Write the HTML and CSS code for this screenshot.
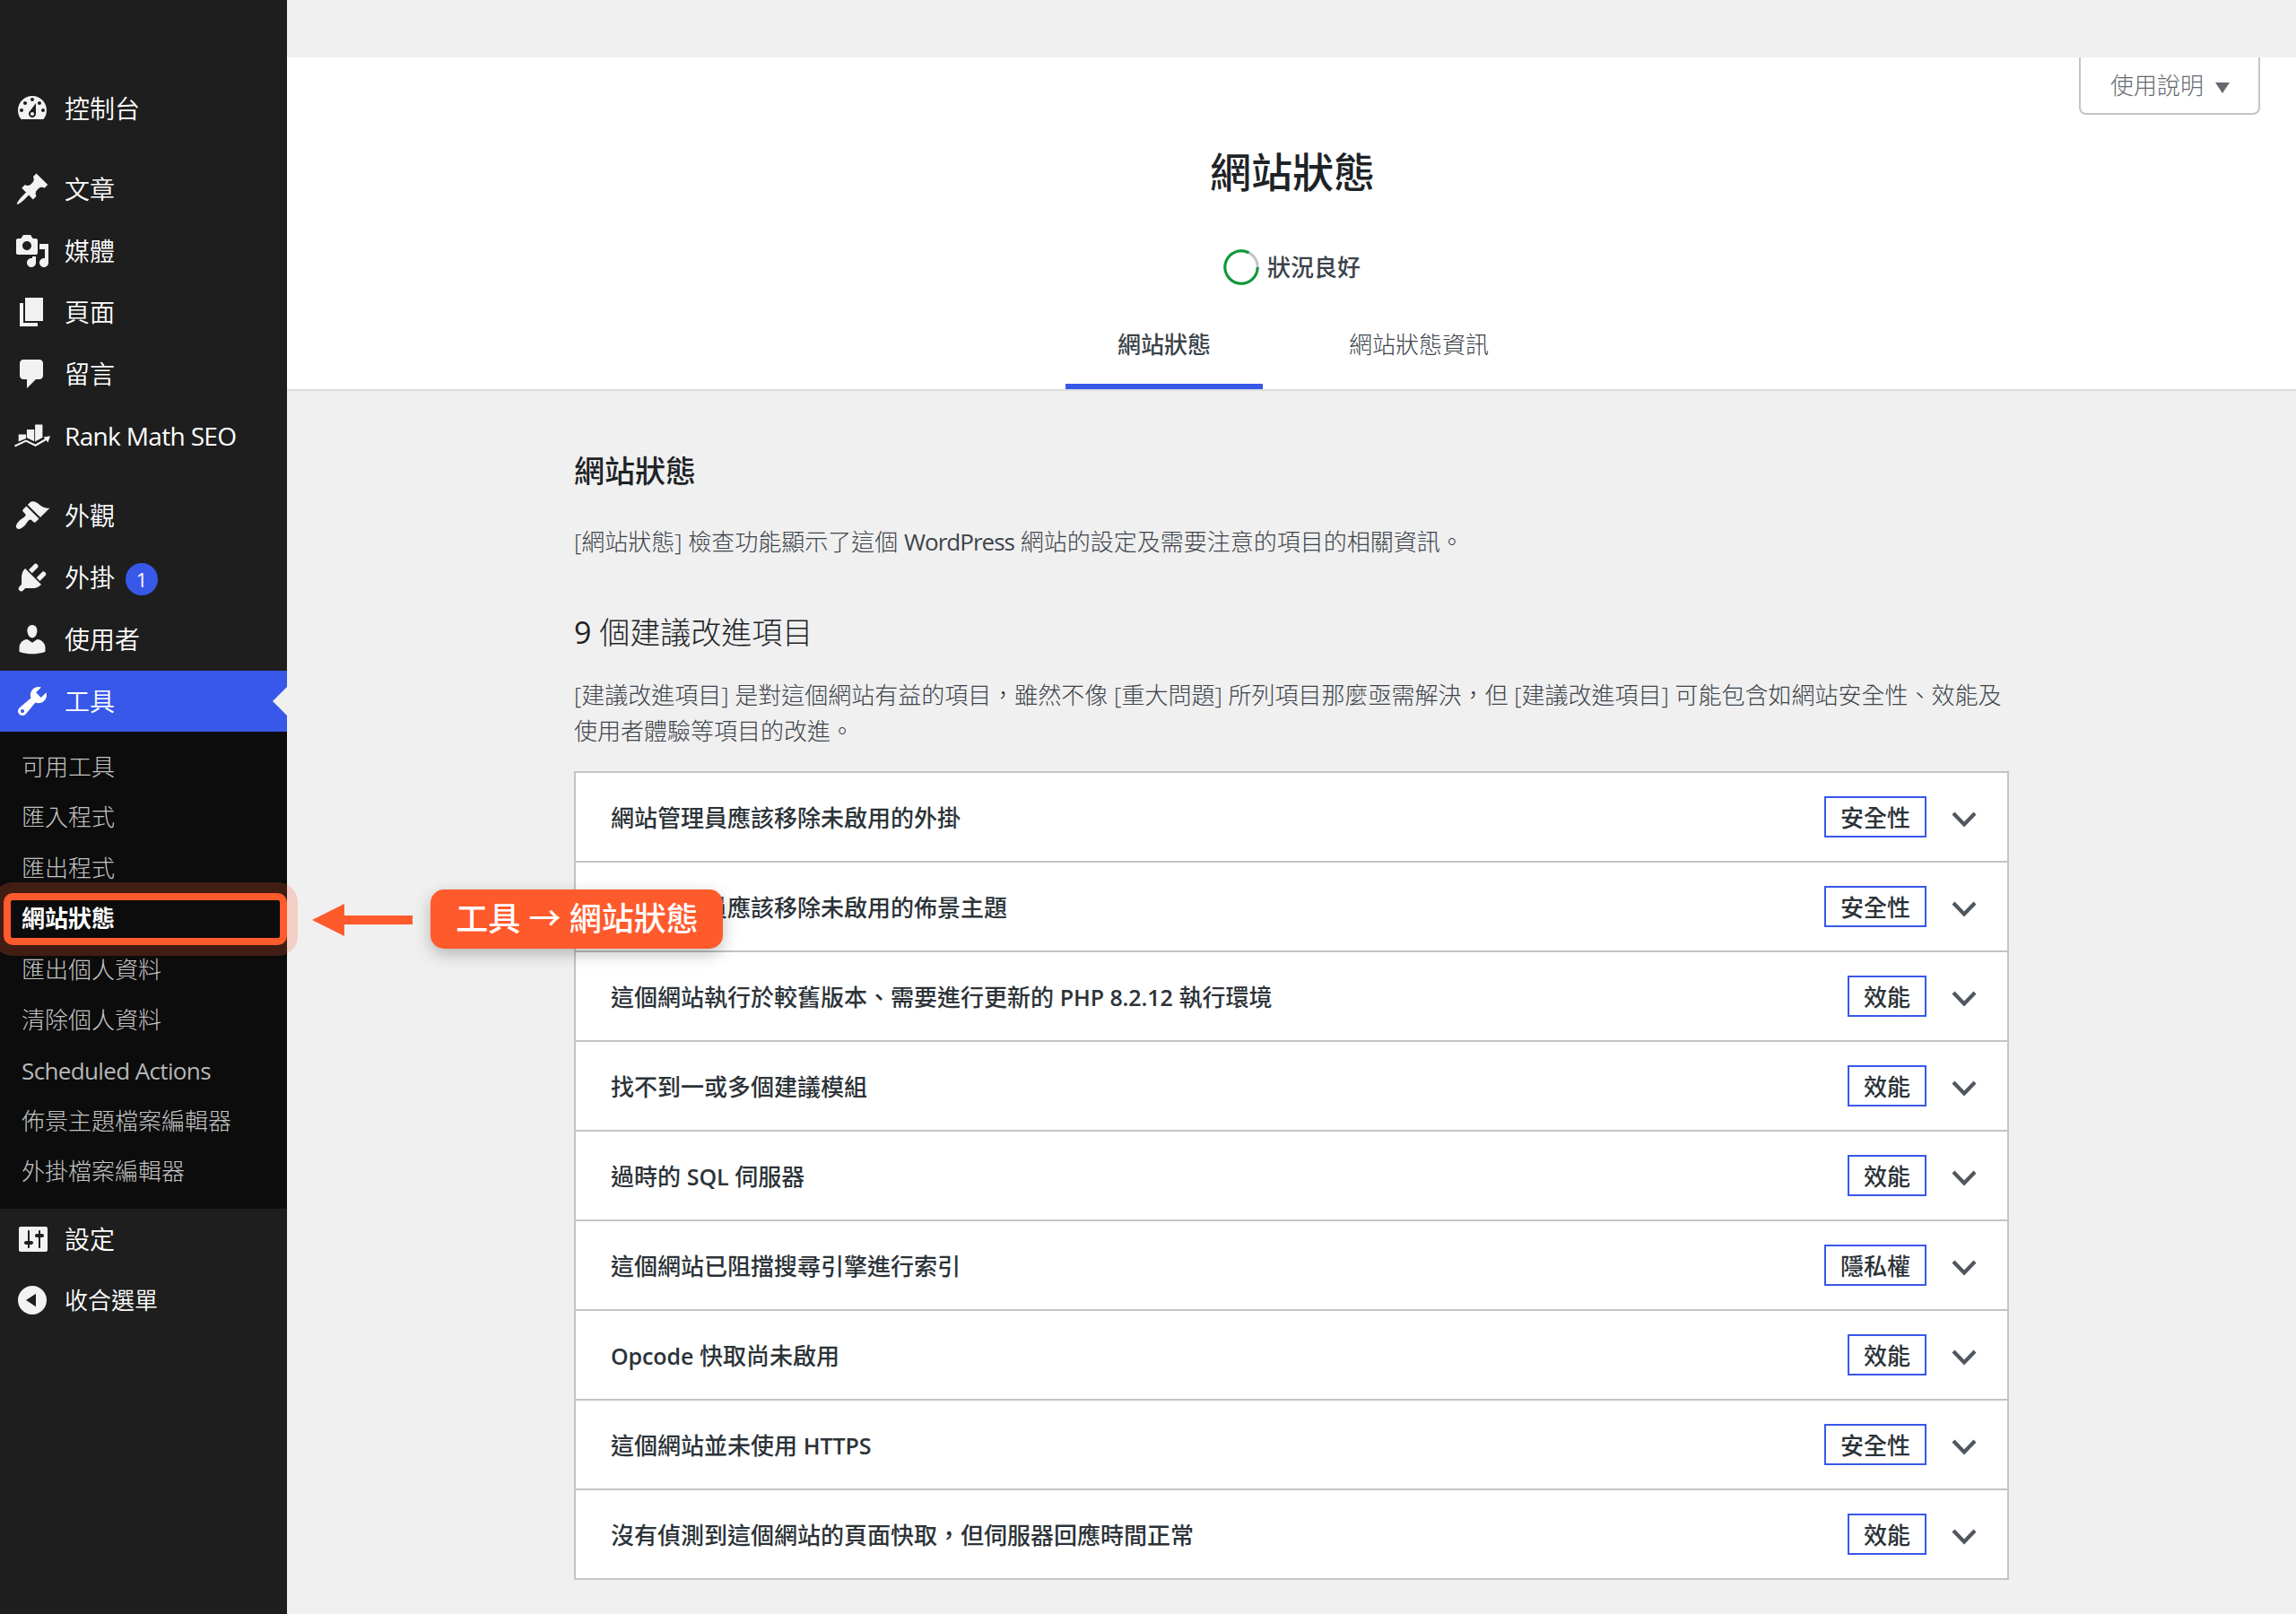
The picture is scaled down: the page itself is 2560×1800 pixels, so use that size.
FILE: index.html
```html
<!DOCTYPE html>
<html lang="zh-TW">
<head>
<meta charset="utf-8">
<title>網站狀態</title>
<link rel="stylesheet" href="styles.css">
</head>
<body>

<nav class="menu">
  <ul class="menu-list">
    <li class="item"><svg class="icon" viewBox="0 0 20 20"><path d="M3.76 16h12.48c1.1-1.37 1.76-3.11 1.76-5 0-4.42-3.58-8-8-8s-8 3.58-8 8c0 1.89.66 3.63 1.76 5zM10 4c.55 0 1 .45 1 1s-.45 1-1 1-1-.45-1-1 .45-1 1-1zM6 6c.55 0 1 .45 1 1s-.45 1-1 1-1-.45-1-1 .45-1 1-1zm8 0c.55 0 1 .45 1 1s-.45 1-1 1-1-.45-1-1 .45-1 1-1zm-5.37 5.55L12 7v6c0 1.1-.9 2-2 2s-2-.9-2-2c0-.57.24-1.08.63-1.45zM4 10c.55 0 1 .45 1 1s-.45 1-1 1-1-.45-1-1 .45-1 1-1zm12 0c.55 0 1 .45 1 1s-.45 1-1 1-1-.45-1-1 .45-1 1-1zm-5 3c0-.55-.45-1-1-1s-1 .45-1 1 .45 1 1 1 1-.45 1-1z"/></svg><span>控制台</span></li>
    <li class="separator"></li>
    <li class="item"><svg class="icon" viewBox="0 0 20 20"><path d="M10.44 3.02l1.82-1.82 6.36 6.35-1.83 1.82c-1.05-.68-2.48-.57-3.41.36l-.75.75c-.92.93-1.04 2.35-.35 3.41l-1.83 1.82-2.41-2.41-2.8 2.79c-.42.42-3.38 2.71-3.8 2.29s1.86-3.39 2.28-3.81l2.79-2.79L4.1 9.36l1.83-1.82c1.05.69 2.48.57 3.4-.36l.75-.75c.93-.92 1.05-2.35.36-3.41z"/></svg><span>文章</span></li>
    <li class="item"><svg class="icon" viewBox="0 0 20 20"><path d="M13 11V4c0-.55-.45-1-1-1h-1.67L9 1H5L3.67 3H2c-.55 0-1 .45-1 1v7c0 .55.45 1 1 1h10c.55 0 1-.45 1-1zM7 4.5c1.38 0 2.5 1.12 2.5 2.5S8.38 9.5 7 9.5 4.5 8.38 4.5 7 5.62 4.5 7 4.5zM14 6h5v10.5c0 1.38-1.12 2.5-2.5 2.5S14 17.88 14 16.5s1.12-2.5 2.5-2.5c.17 0 .34.02.5.05V9h-3V6zm-4 8.05V13h2v3.5c0 1.38-1.12 2.5-2.5 2.5S7 17.88 7 16.5 8.12 14 9.5 14c.17 0 .34.02.5.05z"/></svg><span>媒體</span></li>
    <li class="item"><svg class="icon" viewBox="0 0 20 20"><path d="M6 15V2h10v13H6zm-1 1h8v2H3V5h2v11z"/></svg><span>頁面</span></li>
    <li class="item"><svg class="icon" viewBox="0 0 20 20"><path d="M5 2h9c1.1 0 2 .9 2 2v7c0 1.1-.9 2-2 2h-2l-5 5v-5H5c-1.1 0-2-.9-2-2V4c0-1.1.9-2 2-2z"/></svg><span>留言</span></li>
    <li class="item"><svg class="icon" viewBox="0 0 40 40"><path d="M4.700 18.500H13v4.500L4.700 26.500zM13.900 13h8.300v13.300L13.900 22.300zM23.100 7.500h8.300V22l-8.300 4.500z"/><path d="M.5 31.500L13 25.600 23.500 30.800 36 23.500" fill="none" stroke="#f3f1f1" stroke-width="2.200"/><path d="M32.500 21.500l7.500-1.200-2.500 7.200z"/></svg><span class="latin">Rank Math SEO</span></li>
    <li class="separator"></li>
    <li class="item"><svg class="icon" viewBox="0 0 20 20"><path d="M14.48 11.06L7.41 3.99l1.5-1.5c.5-.56 2.3-.47 3.51.32 1.21.8 1.43 1.28 2.91 2.1 1.18.64 2.45 1.26 4.45.85zm-.71.71L6.7 4.7 4.93 6.47c-.39.39-.39 1.02 0 1.41l1.06 1.06c.39.39.39 1.03 0 1.42-.6.6-1.43 1.11-2.21 1.69-.35.26-.7.53-1.01.84C1.43 14.23.4 16.08 1.4 17.07c.99 1 2.84-.03 4.18-1.36.31-.31.58-.66.85-1.02.57-.78 1.08-1.61 1.69-2.21.39-.39 1.02-.39 1.41 0l1.06 1.06c.39.39 1.02.39 1.41 0z"/></svg><span>外觀</span></li>
    <li class="item"><svg class="icon" viewBox="0 0 20 20"><path d="M13.11 4.36L9.87 7.6 8 5.73l3.24-3.24c.35-.34 1.05-.2 1.56.32.52.51.66 1.21.31 1.55zm-8 1.77l.91-1.12 9.01 9.01-1.19.84c-.71.71-2.63 1.16-3.82 1.16H6.14L4.9 17.26c-.59.59-1.54.59-2.12 0-.59-.58-.59-1.53 0-2.12l1.24-1.24v-3.88c0-1.13.4-3.19 1.09-3.89zm7.26 3.97l3.24-3.24c.34-.35 1.04-.21 1.55.31.52.51.66 1.21.31 1.55l-3.24 3.25z"/></svg><span>外掛</span><b class="count">1</b></li>
    <li class="item"><svg class="icon" viewBox="0 0 20 20"><path d="M10 9.25c-2.27 0-2.73-3.44-2.73-3.44C7 4.02 7.82 2 9.97 2c2.16 0 2.98 2.02 2.71 3.81 0 0-.41 3.44-2.68 3.44zm0 2.57L12.72 10c2.39 0 4.52 2.33 4.52 4.53v2.49s-3.65 1.13-7.24 1.13c-3.65 0-7.24-1.13-7.24-1.13v-2.49c0-2.25 1.94-4.48 4.47-4.48z"/></svg><span>使用者</span></li>
    <li class="item current"><svg class="icon" viewBox="0 0 20 20"><path d="M16.68 9.77c-1.34 1.34-3.3 1.67-4.95.99l-5.41 6.52c-.99.99-2.59.99-3.58 0s-.99-2.59 0-3.57l6.52-5.42c-.68-1.65-.35-3.61.99-4.95 1.28-1.28 3.12-1.62 4.72-1.06l-2.89 2.89 2.82 2.82 2.86-2.87c.53 1.58.18 3.39-1.08 4.65zM3.81 16.21c.4.39 1.04.39 1.43 0 .4-.4.4-1.04 0-1.43-.39-.4-1.03-.4-1.43 0-.39.39-.39 1.03 0 1.43z"/></svg><span>工具</span></li>
  </ul>
  <ul class="submenu">
    <li>可用工具</li>
    <li>匯入程式</li>
    <li>匯出程式</li>
    <li class="active">網站狀態</li>
    <li>匯出個人資料</li>
    <li>清除個人資料</li>
    <li class="latin">Scheduled Actions</li>
    <li>佈景主題檔案編輯器</li>
    <li>外掛檔案編輯器</li>
  </ul>
  <ul class="menu-end">
    <li class="item"><svg class="icon" viewBox="-.5 0 20 20"><path d="M18 16V4c0-.55-.45-1-1-1H3c-.55 0-1 .45-1 1v12c0 .55.45 1 1 1h14c.55 0 1-.45 1-1zM8 11h1c.55 0 1 .45 1 1s-.45 1-1 1H8v1.500c0 .28-.22.5-.5.5s-.5-.22-.5-.5V13H6c-.55 0-1-.45-1-1s.45-1 1-1h1V5.500c0-.28.22-.5.5-.5s.5.22.5.5V11zm5-2h-1c-.55 0-1-.45-1-1s.45-1 1-1h1V5.500c0-.28.22-.5.5-.5s.5.22.5.5V7h1c.55 0 1 .45 1 1s-.45 1-1 1h-1v5.500c0 .28-.22.5-.5.5s-.5-.22-.5-.5V9z"/></svg><span>設定</span></li>
    <li class="item collapse"><svg class="icon" viewBox="0 0 20 20"><path fill-rule="evenodd" d="M10 2a8 8 0 1 0 0 16 8 8 0 0 0 0-16zM12 6.400v7.200L6.500 10z"/></svg><span>收合選單</span></li>
  </ul>
</nav>

<main class="content">
  <header class="header">
    <div class="help">使用說明 <svg width="16" height="12" viewBox="0 0 16 12"><path d="M0 0h16L8 12z" fill="#646970"/></svg></div>
    <h1>網站狀態</h1>
    <div class="progress">
      <svg width="40" height="40" viewBox="0 0 40 40" fill="none" stroke-width="3">
        <circle cx="20" cy="20" r="18.200" stroke="#c3c4c7"/>
        <path d="M38.200 20A18.200 18.200 0 1 1 28.500 3.900" stroke="#0c9a3a"/>
      </svg>
      <span>狀況良好</span>
    </div>
    <div class="tabs">
      <div class="tab on">網站狀態</div>
      <div class="tab">網站狀態資訊</div>
    </div>
  </header>

  <section class="body">
    <h2>網站狀態</h2>
    <p class="intro">[網站狀態] 檢查功能顯示了這個 <span class="latin">WordPress</span> 網站的設定及需要注意的項目的相關資訊。</p>
    <h3><span class="latin">9</span> 個建議改進項目</h3>
    <p class="desc">[建議改進項目] 是對這個網站有益的項目，雖然不像 [重大問題] 所列項目那麼亟需解決，但 [建議改進項目] 可能包含如網站安全性、效能及<br>使用者體驗等項目的改進。</p>

    <div class="issues">
      <div class="issue"><span class="name">網站管理員應該移除未啟用的外掛</span><span class="badge">安全性</span><svg class="chevron" viewBox="0 0 28 18"><path d="M2 2l12 12.500L26 2"/></svg></div>
      <div class="issue"><span class="name">網站管理員應該移除未啟用的佈景主題</span><span class="badge">安全性</span><svg class="chevron" viewBox="0 0 28 18"><path d="M2 2l12 12.500L26 2"/></svg></div>
      <div class="issue"><span class="name">這個網站執行於較舊版本、需要進行更新的 <span class="latin">PHP 8.2.12</span> 執行環境</span><span class="badge">效能</span><svg class="chevron" viewBox="0 0 28 18"><path d="M2 2l12 12.500L26 2"/></svg></div>
      <div class="issue"><span class="name">找不到一或多個建議模組</span><span class="badge">效能</span><svg class="chevron" viewBox="0 0 28 18"><path d="M2 2l12 12.500L26 2"/></svg></div>
      <div class="issue"><span class="name">過時的 <span class="latin">SQL</span> 伺服器</span><span class="badge">效能</span><svg class="chevron" viewBox="0 0 28 18"><path d="M2 2l12 12.500L26 2"/></svg></div>
      <div class="issue"><span class="name">這個網站已阻擋搜尋引擎進行索引</span><span class="badge">隱私權</span><svg class="chevron" viewBox="0 0 28 18"><path d="M2 2l12 12.500L26 2"/></svg></div>
      <div class="issue"><span class="name"><span class="latin">Opcode</span> 快取尚未啟用</span><span class="badge">效能</span><svg class="chevron" viewBox="0 0 28 18"><path d="M2 2l12 12.500L26 2"/></svg></div>
      <div class="issue"><span class="name">這個網站並未使用 <span class="latin">HTTPS</span></span><span class="badge">安全性</span><svg class="chevron" viewBox="0 0 28 18"><path d="M2 2l12 12.500L26 2"/></svg></div>
      <div class="issue"><span class="name">沒有偵測到這個網站的頁面快取，但伺服器回應時間正常</span><span class="badge">效能</span><svg class="chevron" viewBox="0 0 28 18"><path d="M2 2l12 12.500L26 2"/></svg></div>
    </div>
  </section>
</main>

<!-- callout over the page -->
<div class="mark"></div>
<svg class="arrow" viewBox="0 0 112 36"><path d="M0 18L36 0v13h76v10H36v13z" fill="#ff5a2c"/></svg>
<div class="callout">工具 → 網站狀態</div>

</body>
</html>
```
FILE: styles.css
```css
* { box-sizing: border-box; }
body {
	margin: 0;
	position: relative;
	display: flex;
	width: 2560px;
	height: 1800px;
	overflow: hidden;
	background: #f0f0f0;
	color: #3c434a;
	font: 26px/40px "Open Sans", "Noto Sans CJK TC", sans-serif;
}
h1, h2, h3, p, ul { margin: 0; padding: 0; }
ul { list-style: none; }

/* admin menu */
.menu {
	width: 320px;
	flex: none;
	padding-top: 87px;
	background: #1e1e1e;
	color: #fff;
	font-size: 28px;
	font-weight: 350;
}
.menu-list {
	display: flex;
	flex-direction: column;
	height: 729px;
}
.item {
	display: flex;
	align-items: center;
	flex: none;
	height: 68.7px;
	padding-left: 16px;
}
.item .icon {
	width: 40px;
	height: 40px;
	margin-right: 16px;
	fill: #f3f1f1;
}
.item .latin {
	font-weight: 400;
	letter-spacing: -.65px;
}
.separator { height: 21px; }
.count {
	width: 36px;
	height: 36px;
	margin: 3px 0 0 12px;
	border-radius: 50%;
	background: #3858e9;
	text-align: center;
	font-size: 22px;
	line-height: 36px;
	font-weight: 400;
}
.current {
	height: 68px;
	margin-top: auto;
	background: #3858e9;
}
.current .icon { fill: #fff; }
.current::after {
	content: "";
	margin-left: auto;
	border: 16px solid transparent;
	border-left-width: 0;
	border-right-color: #f0f0f0;
}
.submenu {
	height: 532px;
	padding: 12px 0 0 24px;
	background: #0c0c0c;
	color: #c4c4c4;
	font-size: 26px;
	font-weight: 300;
}
.submenu li {
	height: 56.4px;
	line-height: 55px;
}
.submenu .active {
	color: #fff;
	font-weight: 700;
}
.submenu .latin {
	color: #b8b8b8;
	font-weight: 400;
	line-height: 57px;
	letter-spacing: -.63px;
}
.menu-end .item {
	height: 68px;
	padding-bottom: 1px;
}
.collapse { font-size: 26px; }

/* header */
.content {
	flex: 1;
	padding-top: 64px;
}
.header {
	position: relative;
	display: flex;
	flex-direction: column;
	align-items: center;
	height: 372px;
	background: #fff;
	border-bottom: 2px solid #dcdcde;
}
.help {
	position: absolute;
	top: 0;
	right: 40px;
	width: 202px;
	height: 64px;
	padding-left: 33px;
	border: 2px solid #c3c4c7;
	border-top: 0;
	border-radius: 0 0 8px 8px;
	color: #646970;
	font-weight: 300;
	line-height: 63px;
}
.help svg {
	margin-left: 6px;
	margin-bottom: 1px;
}
h1 {
	margin-top: 97px;
	padding-left: 2px;
	color: #1d2327;
	font-size: 46px;
	line-height: 60px;
	font-weight: 500;
}
.progress {
	display: flex;
	align-items: center;
	gap: 9px;
	margin-top: 57px;
	padding-left: 1px;
	font-weight: 500;
}
.tabs {
	display: flex;
	gap: 64px;
	margin-top: auto;
}
.tab {
	width: 220px;
	height: 72px;
	text-align: center;
	font-weight: 300;
	line-height: 44px;
}
.on {
	border-bottom: 6px solid #3858e9;
	font-weight: 500;
}

/* status list */
.body {
	width: 1600px;
	margin: 0 auto;
	padding-top: 64px;
}
h2, h3 {
	color: #1d2327;
	font-size: 34px;
	line-height: 50px;
	font-weight: 500;
}
h3 {
	margin-top: 56px;
	font-weight: 300;
}
h3 .latin { font-weight: 400; }
p {
	font-weight: 300;
	white-space: nowrap;
}
.intro { margin-top: 34px; }
.desc { margin: 25px 0; }
p .latin {
	font-weight: 400;
	letter-spacing: -1px;
}
.issues {
	border: 2px solid #c3c4c7;
	border-bottom: 0;
	background: #fff;
}
.issue {
	display: flex;
	align-items: center;
	height: 100px;
	padding: 0 34px 0 40px;
	border-bottom: 2px solid #c3c4c7;
	color: #2c3338;
	font-weight: 500;
}
.name {
	flex: 1;
	padding-top: 2px;
	margin-left: -1px;
}
.name .latin {
	font-size: 25px;
	font-weight: 600;
	letter-spacing: -.1px;
}
.badge {
	height: 46px;
	padding: 0 16px;
	border: 2px solid #3858e9;
	line-height: 44px;
}
.chevron {
	width: 28px;
	height: 18px;
	margin-left: 28px;
	margin-top: 5px;
	fill: none;
	stroke: #50575e;
	stroke-width: 4.2;
}

/* callout */
.mark {
	position: absolute;
	left: 4px;
	top: 996px;
	width: 316px;
	height: 58px;
	border: 8px solid #ff5a2c;
	border-radius: 10px;
	box-shadow: 0 0 0 12px rgba(255, 90, 44, .22);
}
.arrow {
	position: absolute;
	left: 348px;
	top: 1008px;
	width: 112px;
	height: 36px;
}
.callout {
	position: absolute;
	left: 480px;
	top: 992px;
	width: 326px;
	height: 66px;
	padding-left: 1px;
	border-radius: 15px;
	background: #ff5a2c;
	box-shadow: 0 6px 18px rgba(0, 0, 0, .25);
	color: #fff;
	font-size: 36px;
	line-height: 66px;
	font-weight: 500;
	text-align: center;
	white-space: nowrap;
}
```
